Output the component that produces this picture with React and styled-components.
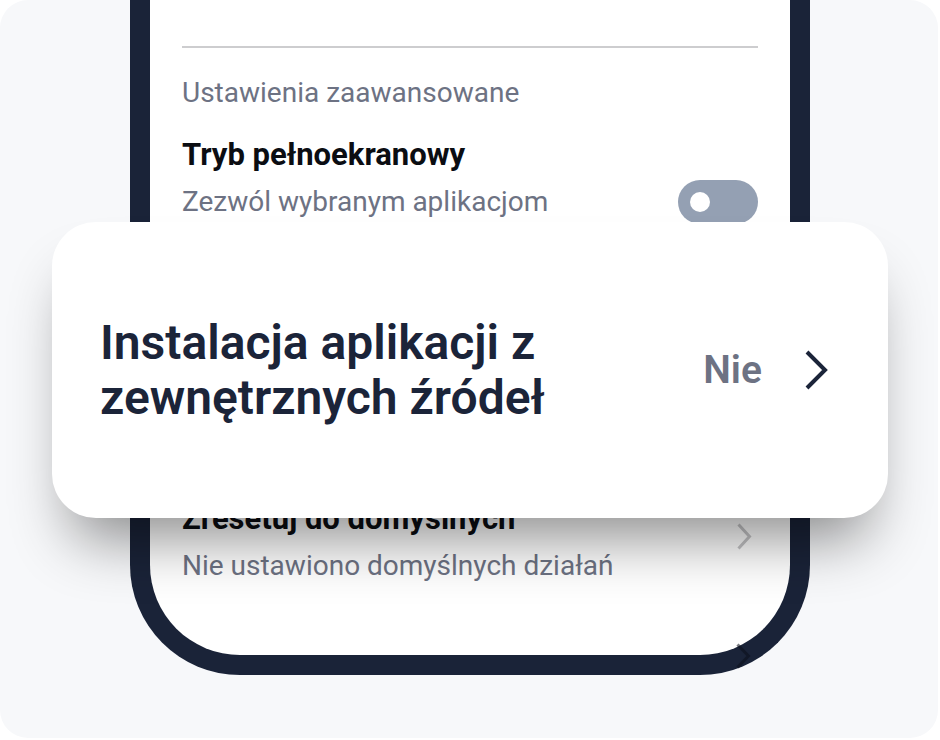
import React from 'react'
import styled, { createGlobalStyle } from 'styled-components';

const GlobalStyle = createGlobalStyle`
  html, body {
    margin: 0;
    padding: 0;
    background: #ffffff;
  }
  body {
    font-family: Roboto, "Noto Sans", "Liberation Sans", sans-serif;
  }
`;

const Panel = styled.div`
  position: relative;
  width: 938px;
  height: 738px;
  background: #f7f8fa;
  border-radius: 28px;
  overflow: hidden;
  padding-left: 130px;
  box-sizing: border-box;
`;

const Phone = styled.div`
  width: 680px;
  height: 675px;
  box-sizing: border-box;
  background: #ffffff;
  border: 20px solid #1a2338;
  border-top: 0;
  border-radius: 0 0 110px 110px;
  padding: 0 32px;
  overflow: hidden;
`;

const Divider = styled.div`
  height: 2px;
  margin-top: 46px;
  background: #cdcdcf;
`;

const SectionLabel = styled.div`
  margin-top: 29px;
  font-size: 28px;
  line-height: 32px;
  color: #6d7283;
`;

const Row = styled.div`
  display: flex;
  align-items: flex-end;
  justify-content: space-between;
  margin-top: ${p => p.$top}px;
`;

const RowText = styled.div`
  display: flex;
  flex-direction: column;
  gap: 15px;
`;

const RowTitle = styled.div`
  font-size: 31px;
  line-height: 32px;
  font-weight: 700;
  color: #0b0d12;
`;

const RowSub = styled.div`
  font-size: 28px;
  line-height: 32px;
  color: #6d7283;
`;

const Toggle = styled.div`
  width: 80px;
  height: 44px;
  border-radius: 22px;
  background: #94a0b3;
  display: flex;
  align-items: center;
  padding-left: 12px;
  box-sizing: border-box;
  margin-bottom: -6px;

  &::before {
    content: "";
    width: 20px;
    height: 20px;
    border-radius: 50%;
    background: #ffffff;
  }
`;

const ChevronBox = styled.div`
  align-self: flex-start;
  margin-top: 20px;
  margin-right: 6px;
  display: flex;
`;

const Card = styled.div`
  position: absolute;
  left: 52px;
  top: 222px;
  width: 836px;
  height: 296px;
  box-sizing: border-box;
  background: #ffffff;
  border-radius: 44px;
  box-shadow: 0 40px 60px -20px rgba(0, 0, 0, 0.45);
  display: flex;
  align-items: center;
  padding: 0 60px 0 48px;
`;

const CardTitle = styled.div`
  flex: 1;
  font-size: 48px;
  line-height: 55px;
  font-weight: 600;
  color: #1b2439;
`;

const CardValue = styled.div`
  font-size: 39px;
  font-weight: 600;
  color: #6d7283;
  margin-right: 42px;
`;

const StrayChevron = styled.div`
  position: absolute;
  left: 735px;
  top: 643px;
  display: flex;
  opacity: 0.55;
`;

function Chevron({ w, h, stroke, color }) {
  return (
    <svg width={w} height={h} viewBox={`0 0 ${w} ${h}`} fill="none">
      <polyline
        points={`${stroke / 2 + 1},${stroke / 2} ${w - stroke / 2 - 1},${h / 2} ${stroke / 2 + 1},${h - stroke / 2}`}
        stroke={color}
        strokeWidth={stroke}
        strokeLinecap="butt"
        strokeLinejoin="miter"
      />
    </svg>
  );
}

function App() {
  return (
    <>
      <GlobalStyle />
      <Panel>
        <Phone>
          <Divider />
          <SectionLabel>Ustawienia zaawansowane</SectionLabel>
          <Row $top={30}>
            <RowText>
              <RowTitle>Tryb pełnoekranowy</RowTitle>
              <RowSub>Zezwól wybranym aplikacjom</RowSub>
            </RowText>
            <Toggle />
          </Row>
          <Row $top={285}>
            <RowText>
              <RowTitle>Zresetuj do domyślnych</RowTitle>
              <RowSub>Nie ustawiono domyślnych działań</RowSub>
            </RowText>
            <ChevronBox>
              <Chevron w={16} h={27} stroke={3} color="#c6c6c8" />
            </ChevronBox>
          </Row>
        </Phone>
        <StrayChevron>
          <Chevron w={16} h={26} stroke={3} color="#0b0f1a" />
        </StrayChevron>
        <Card>
          <CardTitle>
            Instalacja aplikacji z<br />zewnętrznych źródeł
          </CardTitle>
          <CardValue>Nie</CardValue>
          <Chevron w={24} h={40} stroke={4} color="#1b2439" />
        </Card>
      </Panel>
    </>
  );
}

export default App;
